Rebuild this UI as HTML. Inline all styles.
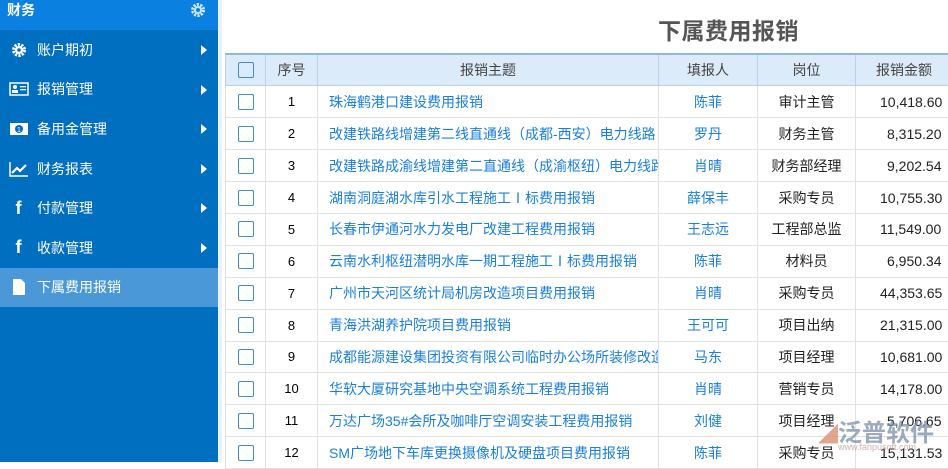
<!DOCTYPE html>
<html><head><meta charset="utf-8"><style>
*{margin:0;padding:0;box-sizing:border-box}
body{width:948px;height:462px;overflow:hidden;background:#fff;font-family:"Liberation Sans","Noto Sans CJK SC",sans-serif;position:relative}
.sb{position:absolute;left:0;top:0;width:218px;height:462px;background:#006fc0}
.gap{position:absolute;left:218px;top:0;width:4px;height:462px;background:#f0f0f0}
.hd{height:30px;background:#0a80e0;color:#fff;font-weight:bold;font-size:14px;line-height:20px;padding-left:7px;position:relative}
.it{height:39.6px;color:#fff;font-size:14px;display:flex;align-items:center;position:relative}
.it .ic{width:37px;display:flex;justify-content:center}
.it .ar{position:absolute;right:11px;top:15px;width:0;height:0;border-left:6px solid #fff;border-top:5px solid transparent;border-bottom:5px solid transparent}
.act{background:#4a98d8}
h1{position:absolute;left:658px;top:12px;font-size:23px;color:#555;font-weight:bold;letter-spacing:0.5px}
table{position:absolute;left:225px;top:53px;border-collapse:collapse;font-size:13px;table-layout:fixed;width:730px}
td,th{border:1px solid #e2e2e2;height:31.9px;white-space:nowrap;overflow:hidden}
th{background:#dcebfa;border-color:#b8d2ea;font-weight:normal;color:#444;font-size:14px;border-top:2px solid #8fb6e0}
.cb{width:16px;height:16px;border:1px solid #3e8ed0;border-radius:2px;margin:auto}
.c{text-align:center}
.l{color:#1a7fe0;padding-left:11px;font-size:14px}
.n{color:#1a7fe0;text-align:center;font-size:14px}
.p{color:#222;text-align:center;font-size:14px}
.m{color:#222;font-size:14px}
</style></head><body>
<div class="sb">
<div class="hd">财务<svg style="position:absolute;right:12px;top:2px" width="16" height="16" viewBox="0 0 16 16"><circle cx="8" cy="8" r="5.5" fill="none" stroke="#cfe4f8" stroke-width="3" stroke-dasharray="2.2 1.3"/><circle cx="8" cy="8" r="4" fill="#cfe4f8"/><circle cx="8" cy="8" r="2" fill="#0a80e0"/></svg></div>
<div class="it"><span class="ic"><svg width="16" height="16" viewBox="0 0 16 16"><circle cx="8" cy="8" r="5.5" fill="none" stroke="#fff" stroke-width="3" stroke-dasharray="2.2 1.3"/><circle cx="8" cy="8" r="4" fill="#fff"/><circle cx="8" cy="8" r="1.8" fill="#006fc0"/></svg></span>账户期初<i class="ar"></i></div>
<div class="it"><span class="ic"><svg width="20" height="14" viewBox="0 0 20 14"><rect x="1" y="1" width="18" height="12" fill="none" stroke="#fff" stroke-width="1.5"/><circle cx="6" cy="5" r="2" fill="#fff"/><rect x="3" y="8" width="6" height="3" fill="#fff"/><rect x="11" y="4" width="6" height="1.3" fill="#fff"/><rect x="11" y="7" width="6" height="1.3" fill="#fff"/></svg></span>报销管理<i class="ar"></i></div>
<div class="it"><span class="ic"><svg width="20" height="14" viewBox="0 0 20 14"><rect x="1" y="1" width="18" height="12" fill="#fff"/><ellipse cx="10" cy="7" rx="4" ry="4" fill="#006fc0"/><text x="10" y="10" font-size="7" fill="#fff" text-anchor="middle">1</text></svg></span>备用金管理<i class="ar"></i></div>
<div class="it"><span class="ic"><svg width="20" height="16" viewBox="0 0 20 16"><path d="M1 1V15H19" fill="none" stroke="#fff" stroke-width="1.5"/><path d="M3 12L8 7L11 10L17 4" fill="none" stroke="#fff" stroke-width="2.2"/></svg></span>财务报表<i class="ar"></i></div>
<div class="it"><span class="ic" style="font-weight:bold;font-size:18px">f</span>付款管理<i class="ar"></i></div>
<div class="it"><span class="ic" style="font-weight:bold;font-size:18px">f</span>收款管理<i class="ar"></i></div>
<div class="it act"><span class="ic"><svg width="12" height="16" viewBox="0 0 12 16"><path d="M0 0H8L12 4V16H0Z" fill="#fff"/></svg></span>下属费用报销</div>
</div>
<div class="gap"></div>
<h1>下属费用报销</h1>
<table>
<colgroup><col style="width:40px"><col style="width:52px"><col style="width:341px"><col style="width:99px"><col style="width:98px"><col style="width:100px"></colgroup>
<tr><th><div class="cb"></div></th><th>序号</th><th>报销主题</th><th>填报人</th><th>岗位</th><th style="text-align:left;padding-left:20px">报销金额</th></tr>
<tr><td><div class="cb"></div></td><td class="c">1</td><td class="l">珠海鹤港口建设费用报销</td><td class="n">陈菲</td><td class="p">审计主管</td><td class="m" style="padding-left:24px">10,418.60</td></tr>
<tr><td><div class="cb"></div></td><td class="c">2</td><td class="l">改建铁路线增建第二线直通线（成都-西安）电力线路</td><td class="n">罗丹</td><td class="p">财务主管</td><td class="m" style="padding-left:31px">8,315.20</td></tr>
<tr><td><div class="cb"></div></td><td class="c">3</td><td class="l">改建铁路成渝线增建第二直通线（成渝枢纽）电力线路</td><td class="n">肖晴</td><td class="p">财务部经理</td><td class="m" style="padding-left:31px">9,202.54</td></tr>
<tr><td><div class="cb"></div></td><td class="c">4</td><td class="l">湖南洞庭湖水库引水工程施工Ⅰ标费用报销</td><td class="n">薛保丰</td><td class="p">采购专员</td><td class="m" style="padding-left:24px">10,755.30</td></tr>
<tr><td><div class="cb"></div></td><td class="c">5</td><td class="l">长春市伊通河水力发电厂改建工程费用报销</td><td class="n">王志远</td><td class="p">工程部总监</td><td class="m" style="padding-left:24px">11,549.00</td></tr>
<tr><td><div class="cb"></div></td><td class="c">6</td><td class="l">云南水利枢纽潜明水库一期工程施工Ⅰ标费用报销</td><td class="n">陈菲</td><td class="p">材料员</td><td class="m" style="padding-left:31px">6,950.34</td></tr>
<tr><td><div class="cb"></div></td><td class="c">7</td><td class="l">广州市天河区统计局机房改造项目费用报销</td><td class="n">肖晴</td><td class="p">采购专员</td><td class="m" style="padding-left:24px">44,353.65</td></tr>
<tr><td><div class="cb"></div></td><td class="c">8</td><td class="l">青海洪湖养护院项目费用报销</td><td class="n">王可可</td><td class="p">项目出纳</td><td class="m" style="padding-left:24px">21,315.00</td></tr>
<tr><td><div class="cb"></div></td><td class="c">9</td><td class="l">成都能源建设集团投资有限公司临时办公场所装修改造</td><td class="n">马东</td><td class="p">项目经理</td><td class="m" style="padding-left:24px">10,681.00</td></tr>
<tr><td><div class="cb"></div></td><td class="c">10</td><td class="l">华软大厦研究基地中央空调系统工程费用报销</td><td class="n">肖晴</td><td class="p">营销专员</td><td class="m" style="padding-left:24px">14,178.00</td></tr>
<tr><td><div class="cb"></div></td><td class="c">11</td><td class="l">万达广场35#会所及咖啡厅空调安装工程费用报销</td><td class="n">刘健</td><td class="p">项目经理</td><td class="m" style="padding-left:31px">5,706.65</td></tr>
<tr><td><div class="cb"></div></td><td class="c">12</td><td class="l">SM广场地下车库更换摄像机及硬盘项目费用报销</td><td class="n">陈菲</td><td class="p">采购专员</td><td class="m" style="padding-left:24px">15,131.53</td></tr>
</table>
<div style="position:absolute;left:818px;top:413px;color:#7a8ea8;opacity:.75;font-size:24px;font-weight:bold;white-space:nowrap"><span style="color:#d9886a;font-size:20px">◢</span>泛普软件</div>
<div style="position:absolute;left:838px;top:442px;color:#b07a70;opacity:.6;font-size:9px;white-space:nowrap">www.fanpusoft.com</div>
</body></html>
